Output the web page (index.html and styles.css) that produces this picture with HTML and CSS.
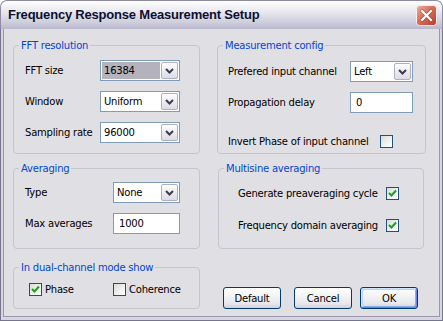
FILE: index.html
```html
<!DOCTYPE html>
<html>
<head>
<meta charset="utf-8">
<link rel="stylesheet" href="styles.css">
</head>
<body>
<div class="window">
  <div class="titlebar">
    <span class="title">Frequency Response Measurement Setup</span>
    <span class="close">
      <svg width="21" height="21" viewBox="0 0 21 21">
        <defs>
          <linearGradient id="cg" x1="0" y1="0" x2="1" y2="1">
            <stop offset="0" stop-color="#eeb0a0"/>
            <stop offset="0.45" stop-color="#d9705c"/>
            <stop offset="1" stop-color="#b93b28"/>
          </linearGradient>
        </defs>
        <rect x="0.5" y="0.5" width="20" height="20" rx="3" fill="url(#cg)" stroke="#f4f0f0"/>
        <path d="M6 6 L15 15 M15 6 L6 15" stroke="#8a2a1c" stroke-width="3.6" stroke-linecap="square" opacity="0.45"/>
        <path d="M6 6 L15 15 M15 6 L6 15" stroke="#ffffff" stroke-width="2.2" stroke-linecap="square"/>
      </svg>
    </span>
  </div>
  <div class="frame">
    <div class="client">
      <fieldset class="group">
        <legend>FFT resolution</legend>
        <div class="body fft">
          <div class="row"><span class="lbl w75">FFT size</span>
            <div class="combo w80 sel"><span class="val">16384</span><span class="drop"><svg width="9" height="6" viewBox="0 0 9 6"><path d="M1 1 L4.5 4.5 L8 1" fill="none" stroke="#3c3c4c" stroke-width="2"/></svg></span></div></div>
          <div class="row"><span class="lbl w75">Window</span>
            <div class="combo w80"><span class="val">Uniform</span><span class="drop"><svg width="9" height="6" viewBox="0 0 9 6"><path d="M1 1 L4.5 4.5 L8 1" fill="none" stroke="#3c3c4c" stroke-width="2"/></svg></span></div></div>
          <div class="row"><span class="lbl w75">Sampling rate</span>
            <div class="combo w80"><span class="val">96000</span><span class="drop"><svg width="9" height="6" viewBox="0 0 9 6"><path d="M1 1 L4.5 4.5 L8 1" fill="none" stroke="#3c3c4c" stroke-width="2"/></svg></span></div></div>
        </div>
      </fieldset>

      <fieldset class="group">
        <legend>Measurement config</legend>
        <div class="body meas">
          <div class="row"><span class="lbl w122">Prefered input channel</span>
            <div class="combo w63"><span class="val">Left</span><span class="drop"><svg width="9" height="6" viewBox="0 0 9 6"><path d="M1 1 L4.5 4.5 L8 1" fill="none" stroke="#3c3c4c" stroke-width="2"/></svg></span></div></div>
          <div class="row"><span class="lbl w122">Propagation delay</span>
            <div class="edit w63">0</div></div>
          <div class="row cbrow"><span class="lbl w152">Invert Phase of input channel</span>
            <span class="check"></span></div>
        </div>
      </fieldset>

      <fieldset class="group">
        <legend>Averaging</legend>
        <div class="body avg">
          <div class="row"><span class="lbl w88">Type</span>
            <div class="combo w67"><span class="val">None</span><span class="drop"><svg width="9" height="6" viewBox="0 0 9 6"><path d="M1 1 L4.5 4.5 L8 1" fill="none" stroke="#3c3c4c" stroke-width="2"/></svg></span></div></div>
          <div class="row"><span class="lbl w88">Max averages</span>
            <div class="edit w67">1000</div></div>
        </div>
      </fieldset>

      <fieldset class="group multi">
        <legend>Multisine averaging</legend>
        <div class="body ms">
          <div class="row cbrow"><span class="lbl w148">Generate preaveraging cycle</span>
            <span class="check on"><svg width="11" height="11" viewBox="0 0 11 11"><path d="M2 5 L4.5 7.5 L9 2.5" fill="none" stroke="#21a121" stroke-width="2.2"/></svg></span></div>
          <div class="row cbrow"><span class="lbl w148">Frequency domain averaging</span>
            <span class="check on"><svg width="11" height="11" viewBox="0 0 11 11"><path d="M2 5 L4.5 7.5 L9 2.5" fill="none" stroke="#21a121" stroke-width="2.2"/></svg></span></div>
        </div>
      </fieldset>

      <fieldset class="group dualgroup">
        <legend>In dual-channel mode show</legend>
        <div class="body dual">
          <div class="opt w84"><span class="check on"><svg width="11" height="11" viewBox="0 0 11 11"><path d="M2 5 L4.5 7.5 L9 2.5" fill="none" stroke="#21a121" stroke-width="2.2"/></svg></span><span class="optlbl">Phase</span></div>
          <div class="opt"><span class="check"></span><span class="optlbl">Coherence</span></div>
        </div>
      </fieldset>

      <div class="buttons">
        <button class="btn b-default">Default</button>
        <button class="btn b-cancel">Cancel</button>
        <button class="btn b-ok">OK</button>
      </div>
    </div>
  </div>
</div>
</body>
</html>
```

FILE: styles.css
```css
html, body {
  margin: 0;
  padding: 0;
  background: #ffffff;
}

.window {
  width: 443px;
  height: 321px;
  display: flex;
  flex-direction: column;
  font-family: "DejaVu Sans", "Liberation Sans", sans-serif;
  font-size: 10px;
  letter-spacing: -0.22px;
  color: #000;
}

.titlebar {
  flex: none;
  height: 29px;
  box-sizing: border-box;
  border: 1px solid #8d8ca4;
  border-bottom: none;
  border-radius: 7px 7px 0 0;
  background: linear-gradient(to bottom, #ffffff 0%, #f6f6f9 15%, #e4e4ec 45%, #cfcfdd 75%, #b9b8cc 100%);
  display: flex;
  align-items: center;
  justify-content: space-between;
  padding: 0 5px 1px 7px;
}

.title {
  font-family: "Liberation Sans", sans-serif;
  font-weight: bold;
  font-size: 13px;
  color: #0d1130;
  letter-spacing: -0.2px;
}

.close {
  display: flex;
  margin-top: 1px;
}

.frame {
  flex: 1;
  box-sizing: border-box;
  border: 1px solid #76758e;
  border-top: none;
  background: #d6d5e0;
  padding: 0 2px 3px;
  display: flex;
}

.client {
  flex: 1;
  background: #e0dfe3;
  border: 1px solid #9897ad;
  border-top: none;
  padding: 10px 0 0 9px;
  display: grid;
  grid-template-columns: 187px 209px;
  grid-template-rows: 115px 87px 52px;
  column-gap: 17px;
  row-gap: 8px;
  align-content: start;
}

.group {
  margin: 0;
  padding: 0;
  border: 1px solid #c6c5cd;
  border-radius: 4px;
  min-inline-size: 0;
  box-sizing: border-box;
}

.group legend {
  margin-left: 5px;
  padding: 0 2px;
  color: #0046d5;
  line-height: 13px;
  font-size: 10px;
}

.dualgroup {
  margin-top: 4px;
}

.multi {
  margin: 0 2px 0 1px;
}

.body {
  display: flex;
  flex-direction: column;
}

.row {
  display: flex;
  align-items: center;
  height: 21px;
}

.fft { padding: 8px 0 0 11px; gap: 10px; }
.meas { padding: 9px 0 0 10px; gap: 10px; }
.meas .cbrow { margin-top: 12px; height: 13px; }
.avg { padding: 7px 0 0 11px; gap: 10px; }
.ms { padding: 11px 0 0 19px; gap: 17px; }
.ms .cbrow { height: 15px; }
.dual { padding: 8px 0 0 15px; flex-direction: row; }

.lbl { flex: none; }
.w75 { width: 75px; }
.w88 { width: 88px; }
.w122 { width: 122px; }
.w148 { width: 148px; }
.w152 { width: 152px; }
.w84 { width: 84px; }
.w80 { width: 80px; }
.w67 { width: 67px; }
.w63 { width: 63px; }

.combo {
  flex: none;
  box-sizing: border-box;
  height: 21px;
  border: 1px solid #7f9db9;
  background: #fff;
  padding: 1px;
  display: flex;
}

.combo .val {
  flex: 1;
  display: flex;
  align-items: center;
  padding-left: 2px;
}

.combo.sel .val {
  background: #b3b2bd;
  margin-right: 1px;
}

.drop {
  flex: none;
  width: 17px;
  box-sizing: border-box;
  border: 1px solid #aeb0c4;
  border-radius: 2px;
  background: linear-gradient(to bottom, #ffffff 0%, #eeeef3 45%, #dcdce5 100%);
  display: flex;
  align-items: center;
  justify-content: center;
}

.edit {
  flex: none;
  box-sizing: border-box;
  height: 21px;
  border: 1px solid #7f9db9;
  background: #fff;
  padding-left: 5px;
  display: flex;
  align-items: center;
}

.check {
  flex: none;
  width: 13px;
  height: 13px;
  box-sizing: border-box;
  border: 1px solid #1c5180;
  background: linear-gradient(135deg, #dcdcd6 0%, #f2f2ef 60%, #ffffff 100%);
  display: flex;
  align-items: center;
  justify-content: center;
}

.opt {
  display: flex;
  align-items: center;
  height: 15px;
}

.optlbl {
  margin-left: 3px;
}

.buttons {
  grid-column: 2;
  grid-row: 3;
  align-self: end;
  display: flex;
  padding-left: 6px;
}

.btn {
  width: 58px;
  height: 22px;
  box-sizing: border-box;
  padding: 0;
  border: 1px solid #003c74;
  border-radius: 3px;
  background: linear-gradient(to bottom, #ffffff 0%, #f4f4f6 40%, #e6e6ec 80%, #cfcfda 100%);
  font-family: "DejaVu Sans", "Liberation Sans", sans-serif;
  font-size: 10px;
  letter-spacing: -0.22px;
  color: #000;
}

.b-cancel { margin-left: 13px; }
.b-ok {
  margin-left: 8px;
  box-shadow: inset 1px 1px 0 #cee7ff, inset -1px -1px 0 #6982ee, inset 2px 2px 0 #bcd4f6, inset -2px -2px 0 #89adeb;
}
```
